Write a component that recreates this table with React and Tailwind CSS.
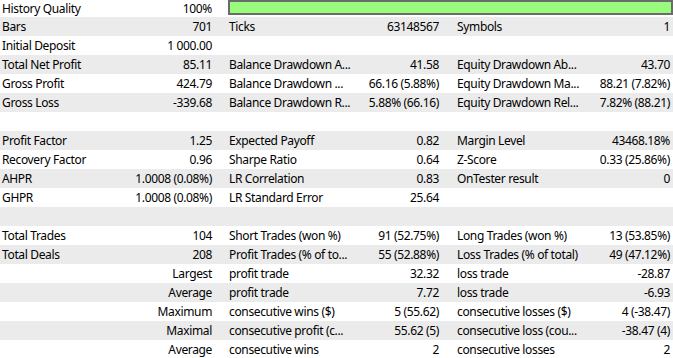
import React from 'react';

const rows = [
  ['Bars', '701', 'Ticks', '63148567', 'Symbols', '1'],
  ['Initial Deposit', '1 000.00', '', '', '', ''],
  ['Total Net Profit', '85.11', 'Balance Drawdown A...', '41.58', 'Equity Drawdown Ab...', '43.70'],
  ['Gross Profit', '424.79', 'Balance Drawdown ...', '66.16 (5.88%)', 'Equity Drawdown Ma...', '88.21 (7.82%)'],
  ['Gross Loss', '-339.68', 'Balance Drawdown R...', '5.88% (66.16)', 'Equity Drawdown Rel...', '7.82% (88.21)'],
  ['', '', '', '', '', ''],
  ['Profit Factor', '1.25', 'Expected Payoff', '0.82', 'Margin Level', '43468.18%'],
  ['Recovery Factor', '0.96', 'Sharpe Ratio', '0.64', 'Z-Score', '0.33 (25.86%)'],
  ['AHPR', '1.0008 (0.08%)', 'LR Correlation', '0.83', 'OnTester result', '0'],
  ['GHPR', '1.0008 (0.08%)', 'LR Standard Error', '25.64', '', ''],
  ['', '', '', '', '', ''],
  ['Total Trades', '104', 'Short Trades (won %)', '91 (52.75%)', 'Long Trades (won %)', '13 (53.85%)'],
  ['Total Deals', '208', 'Profit Trades (% of to...', '55 (52.88%)', 'Loss Trades (% of total)', '49 (47.12%)'],
  ['', 'Largest', 'profit trade', '32.32', 'loss trade', '-28.87'],
  ['', 'Average', 'profit trade', '7.72', 'loss trade', '-6.93'],
  ['', 'Maximum', 'consecutive wins ($)', '5 (55.62)', 'consecutive losses ($)', '4 (-38.47)'],
  ['', 'Maximal', 'consecutive profit (c...', '55.62 (5)', 'consecutive loss (cou...', '-38.47 (4)'],
  ['', 'Average', 'consecutive wins', '2', 'consecutive losses', '2'],
];

function Group({ label, value, width, pr }) {
  return (
    <div className={`flex ${width} shrink-0 items-center justify-between whitespace-nowrap pl-[2px] ${pr}`}>
      <span>{label}</span>
      <span>{value}</span>
    </div>
  );
}

export default function App() {
  return (
    <div
      className="w-[673px] h-[358px] overflow-hidden bg-white text-[12px] tracking-[-0.35px] text-black"
      style={{ fontFamily: '"Noto Sans", "Open Sans", sans-serif' }}
    >
      {/* first row is partly scrolled off */}
      <div className="flex h-[17px] items-center bg-white">
        <Group label="History Quality" value="100%" width="w-[227px]" pr="pr-[15px]" />
        <div className="ml-[1px] h-[15px] flex-1 self-start border-2 border-[#6b6b6b] bg-[#98fb7c]" />
      </div>
      {rows.map((r, i) => (
        <div key={i} className={`flex h-[19px] items-center ${i % 2 === 0 ? 'bg-[#ebebeb]' : 'bg-white'}`}>
          <Group label={r[0]} value={r[1]} width="w-[227px]" pr="pr-[15px]" />
          <Group label={r[2]} value={r[3]} width="w-[228px]" pr="pr-[16px]" />
          <Group label={r[4]} value={r[5]} width="w-[218px]" pr="pr-[3px]" />
        </div>
      ))}
    </div>
  );
}
